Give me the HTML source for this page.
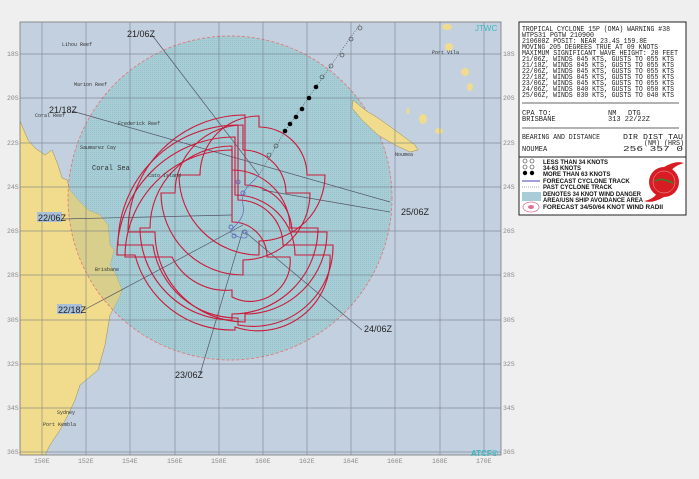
<!DOCTYPE html>
<html><head><meta charset="utf-8"><style>
html,body{margin:0;padding:0;background:#efefef;width:699px;height:479px;overflow:hidden}
svg{display:block}
.t{font-family:"Liberation Mono",monospace;font-size:7px;fill:#222}
.l{font-family:"Liberation Sans",sans-serif;font-size:6px;font-weight:bold;fill:#111}
.tag{font-family:"Liberation Sans",sans-serif;font-size:9px;fill:#222}
.ax{font-family:"Liberation Mono",monospace;font-size:6.5px;fill:#888}
.pl{font-family:"Liberation Mono",monospace;font-size:5px;fill:#333}
</style></head><body>
<svg width="699" height="479" viewBox="0 0 699 479">
<defs>
<clipPath id="map"><rect x="20" y="22" width="481" height="433"/></clipPath>
<clipPath id="circ"><circle cx="230" cy="198" r="162"/></clipPath>
<pattern id="hatch" width="2" height="2" patternUnits="userSpaceOnUse"><rect width="2" height="2" fill="#a9cdd6"/><rect width="1" height="1" fill="#95c5ca"/></pattern>
</defs>
<rect x="20" y="22" width="481" height="433" fill="#c3d0df"/>
<g clip-path="url(#map)">
<circle cx="230" cy="198" r="162" fill="url(#hatch)"/>
<polygon points="20,121 28,140 35,148 45,155 52,150 58,165 62,178 67,180 70,190 78,200 88,210 100,215 108,225 110,245 114,250 110,265 116,275 122,290 118,300 110,315 105,345 98,370 80,385 75,400 68,415 60,430 50,445 45,455 20,455" fill="#f0dc8c" stroke="#9a8a50" stroke-width="0.5"/>
<polygon clip-path="url(#circ)" points="20,121 28,140 35,148 45,155 52,150 58,165 62,178 67,180 70,190 78,200 88,210 100,215 108,225 110,245 114,250 110,265 116,275 122,290 118,300 110,315 105,345 98,370 80,385 75,400 68,415 60,430 50,445 45,455 20,455" fill="#d8cf8c"/>
<circle cx="230" cy="198" r="162" fill="none" stroke="#e87070" stroke-width="0.8" stroke-dasharray="3,2"/>
<path d="M353,100 L365,110 L378,118 L392,128 L415,145 L418,150 L410,152 L395,145 L378,135 L362,120 L352,108Z" fill="#f0dc8c" stroke="#9a8a50" stroke-width="0.5"/>
<ellipse cx="447" cy="27" rx="5" ry="3" fill="#f0dc8c"/><ellipse cx="449" cy="47" rx="4" ry="4" fill="#f0dc8c"/>
<ellipse cx="465" cy="72" rx="4" ry="4" fill="#f0dc8c"/><ellipse cx="470" cy="87" rx="3" ry="4" fill="#f0dc8c"/>
<ellipse cx="423" cy="119" rx="4" ry="5" fill="#f0dc8c"/><ellipse cx="439" cy="131" rx="4" ry="3" fill="#f0dc8c"/>
<ellipse cx="408" cy="111" rx="1.5" ry="3" fill="#f0dc8c"/>
<g stroke="#6a7280" stroke-width="0.7" opacity="0.7">
<line x1="42" y1="22" x2="42" y2="455"/><line x1="86" y1="22" x2="86" y2="455"/><line x1="130" y1="22" x2="130" y2="455"/><line x1="175" y1="22" x2="175" y2="455"/><line x1="219" y1="22" x2="219" y2="455"/><line x1="263" y1="22" x2="263" y2="455"/><line x1="307" y1="22" x2="307" y2="455"/><line x1="351" y1="22" x2="351" y2="455"/><line x1="395" y1="22" x2="395" y2="455"/><line x1="440" y1="22" x2="440" y2="455"/><line x1="484" y1="22" x2="484" y2="455"/>
<line x1="20" y1="54" x2="501" y2="54"/><line x1="20" y1="98" x2="501" y2="98"/><line x1="20" y1="143" x2="501" y2="143"/><line x1="20" y1="187" x2="501" y2="187"/><line x1="20" y1="231" x2="501" y2="231"/><line x1="20" y1="275" x2="501" y2="275"/><line x1="20" y1="320" x2="501" y2="320"/><line x1="20" y1="364" x2="501" y2="364"/><line x1="20" y1="408" x2="501" y2="408"/><line x1="20" y1="452" x2="501" y2="452"/>
</g>
<g stroke="#556" stroke-width="0.7">
<line x1="152" y1="35" x2="259" y2="175"/><line x1="72" y1="111" x2="390" y2="202"/><line x1="62" y1="219" x2="232" y2="215"/><line x1="82" y1="311" x2="243" y2="225"/><line x1="200" y1="374" x2="243" y2="230"/><line x1="362" y1="330" x2="245" y2="232"/><line x1="390" y1="212" x2="262" y2="190"/>
</g>
<g fill="none" stroke="#cc1a3a" stroke-width="1.1">
<path d="M259,127 A48,48 0 0 1 307,175 L325,175 A66,66 0 0 1 259,241 L259,255 A80,80 0 0 1 179,175 L200,175 A59,59 0 0 1 259,116 Z"/>
<path d="M243,150 A43,43 0 0 1 286,193 L310,193 A67,67 0 0 1 243,260 L243,275 A82,82 0 0 1 161,193 L175,193 A68,68 0 0 1 243,125 Z"/>
<path d="M232,170 A58,58 0 0 1 290,228 L318,228 A86,86 0 0 1 232,314 L232,320 A92,92 0 0 1 140,228 L150,228 A82,82 0 0 1 232,146 Z"/>
<path d="M245,185 A47,47 0 0 1 292,232 L327,232 A82,82 0 0 1 245,314 L245,322 A90,90 0 0 1 155,232 L128,232 A117,117 0 0 1 245,115 Z"/>
<path d="M235,195 A60,60 0 0 1 295,255 L330,255 A72,72 0 0 1 235,327 L235,330 A100,100 0 0 1 135,255 L117,255 A118,118 0 0 1 235,137 Z"/>
<path d="M238,200 A45,45 0 0 1 283,245 L333,245 A80,80 0 0 1 238,325 L238,318 A85,85 0 0 1 153,245 L118,245 A120,120 0 0 1 238,125 Z"/>
<path d="M232,222 A35,35 0 0 1 267,257 L290,257 A40,40 0 0 1 232,297 L232,290 A60,60 0 0 1 172,257 L125,257 A107,107 0 0 1 232,150 Z"/>
</g>
<path d="M259,175 C250,185 240,190 243,205 C246,218 235,225 230,232 C240,240 252,240 245,232" fill="none" stroke="#6670c0" stroke-width="0.8"/>
<circle cx="238" cy="182" r="2" fill="none" stroke="#6670c0"/><circle cx="243" cy="193" r="2" fill="none" stroke="#6670c0"/><circle cx="231" cy="227" r="2" fill="none" stroke="#6670c0"/><circle cx="245" cy="232" r="2" fill="none" stroke="#6670c0"/><circle cx="234" cy="236" r="2" fill="none" stroke="#6670c0"/>
<path d="M259,175 L285,131 L316,87 L360,24" fill="none" stroke="#444" stroke-width="0.6" stroke-dasharray="1,1.5"/>
<g fill="#000"><circle cx="285" cy="131" r="2.3"/><circle cx="290" cy="124" r="2.3"/><circle cx="296" cy="117" r="2.3"/><circle cx="302" cy="109" r="2.3"/><circle cx="309" cy="98" r="2.3"/><circle cx="316" cy="87" r="2.3"/></g>
<g fill="none" stroke="#333" stroke-width="0.6"><circle cx="269" cy="155" r="2"/><circle cx="276" cy="146" r="2"/><circle cx="322" cy="77" r="2"/><circle cx="331" cy="66" r="2"/><circle cx="342" cy="55" r="2"/><circle cx="351" cy="39" r="2"/><circle cx="360" cy="28" r="2"/></g>
</g>
<rect x="20" y="22" width="481" height="433" fill="none" stroke="#777" stroke-width="0.8"/>
<text class="pl" x="62" y="46">Lihou Reef</text><text class="pl" x="74" y="86">Marion Reef</text>
<text class="pl" x="35" y="117">Coral Reef</text><text class="pl" x="118" y="125">Frederick Reef</text>
<text class="pl" x="80" y="149">Saumarez Cay</text><text class="pl" x="148" y="177">Cato Island</text>
<text class="pl" x="92" y="170" style="font-size:7px">Coral Sea</text>
<text class="pl" x="95" y="271">Brisbane</text><text class="pl" x="57" y="414">Sydney</text><text class="pl" x="43" y="426">Port Kembla</text>
<text class="pl" x="432" y="54">Port Vila</text><text class="pl" x="395" y="156">Noumea</text>
<g class="tag">
<text x="127" y="37">21/06Z</text><text x="49" y="113">21/18Z</text>
<rect x="37" y="212" width="25" height="10" fill="#a8c0da"/><text x="38" y="221">22/06Z</text>
<rect x="57" y="304" width="25" height="10" fill="#a8c0da"/><text x="58" y="313">22/18Z</text>
<text x="175" y="378">23/06Z</text><text x="364" y="332">24/06Z</text><text x="401" y="215">25/06Z</text></g>
<text x="475" y="31" style="font-family:'Liberation Sans',sans-serif;font-size:8px;fill:#3bb8c0">JTWC</text>
<text x="471" y="456" style="font-family:'Liberation Sans',sans-serif;font-size:8px;font-weight:bold;fill:#3bb8c0">ATCF®</text>
<g class="ax"><text x="7" y="56">18S</text><text x="7" y="100">20S</text><text x="7" y="145">22S</text><text x="7" y="189">24S</text><text x="7" y="233">26S</text><text x="7" y="277">28S</text><text x="7" y="322">30S</text><text x="7" y="366">32S</text><text x="7" y="410">34S</text><text x="7" y="454">36S</text>
<text x="503" y="56">18S</text><text x="503" y="100">20S</text><text x="503" y="145">22S</text><text x="503" y="189">24S</text><text x="503" y="233">26S</text><text x="503" y="277">28S</text><text x="503" y="322">30S</text><text x="503" y="366">32S</text><text x="503" y="410">34S</text><text x="503" y="454">36S</text>
<text x="34" y="463">150E</text><text x="78" y="463">152E</text><text x="122" y="463">154E</text><text x="167" y="463">156E</text><text x="211" y="463">158E</text><text x="255" y="463">160E</text><text x="299" y="463">162E</text><text x="343" y="463">164E</text><text x="387" y="463">166E</text><text x="432" y="463">168E</text><text x="476" y="463">170E</text></g>
<rect x="519" y="22" width="167" height="135" fill="#fff" stroke="#222" stroke-width="1"/>
<g class="t">
<text x="522" y="31" textLength="148" lengthAdjust="spacingAndGlyphs">TROPICAL CYCLONE 15P (OMA) WARNING #38</text>
<text x="522" y="37" textLength="72" lengthAdjust="spacingAndGlyphs">WTPS31 PGTW 210900</text>
<text x="522" y="43" textLength="125" lengthAdjust="spacingAndGlyphs">210600Z POSIT: NEAR 23.4S 159.8E</text>
<text x="522" y="49" textLength="136" lengthAdjust="spacingAndGlyphs">MOVING 205 DEGREES TRUE AT 09 KNOTS</text>
<text x="522" y="55" textLength="156" lengthAdjust="spacingAndGlyphs">MAXIMUM SIGNIFICANT WAVE HEIGHT: 20 FEET</text>
<text x="522" y="61" textLength="152" lengthAdjust="spacingAndGlyphs">21/06Z, WINDS 045 KTS, GUSTS TO 055 KTS</text>
<text x="522" y="67" textLength="152" lengthAdjust="spacingAndGlyphs">21/18Z, WINDS 045 KTS, GUSTS TO 055 KTS</text>
<text x="522" y="73" textLength="152" lengthAdjust="spacingAndGlyphs">22/06Z, WINDS 045 KTS, GUSTS TO 055 KTS</text>
<text x="522" y="79" textLength="152" lengthAdjust="spacingAndGlyphs">22/18Z, WINDS 045 KTS, GUSTS TO 055 KTS</text>
<text x="522" y="85" textLength="152" lengthAdjust="spacingAndGlyphs">23/06Z, WINDS 045 KTS, GUSTS TO 055 KTS</text>
<text x="522" y="91" textLength="152" lengthAdjust="spacingAndGlyphs">24/06Z, WINDS 040 KTS, GUSTS TO 050 KTS</text>
<text x="522" y="97" textLength="152" lengthAdjust="spacingAndGlyphs">25/06Z, WINDS 030 KTS, GUSTS TO 040 KTS</text>
<text x="522" y="115">CPA TO:</text><text x="608" y="115">NM</text><text x="628" y="115">DTG</text>
<text x="522" y="121">BRISBANE</text><text x="608" y="121">313  22/22Z</text>
<text x="522" y="139" textLength="78" lengthAdjust="spacingAndGlyphs">BEARING AND DISTANCE</text><text x="623" y="139" textLength="60" lengthAdjust="spacingAndGlyphs">DIR  DIST  TAU</text>
<text x="644" y="145" textLength="40" lengthAdjust="spacingAndGlyphs">(NM) (HRS)</text>
<text x="522" y="151">NOUMEA</text><text x="623" y="151" textLength="60" lengthAdjust="spacingAndGlyphs">256   357    0</text>
</g>
<line x1="522" y1="103" x2="679" y2="103" stroke="#999" stroke-width="1.5"/>
<line x1="522" y1="128" x2="679" y2="128" stroke="#999" stroke-width="1.5"/>
<rect x="519" y="157" width="167" height="58" fill="#fff" stroke="#222" stroke-width="1"/>
<g class="l"><text x="543" y="164">LESS THAN 34 KNOTS</text><text x="543" y="170">34-63 KNOTS</text><text x="543" y="176">MORE THAN 63 KNOTS</text><text x="543" y="183">FORECAST CYCLONE TRACK</text><text x="543" y="189">PAST CYCLONE TRACK</text><text x="543" y="196" textLength="98" lengthAdjust="spacingAndGlyphs">DENOTES 34 KNOT WIND DANGER</text><text x="543" y="202" textLength="100" lengthAdjust="spacingAndGlyphs">AREA/USN SHIP AVOIDANCE AREA</text><text x="543" y="209" textLength="120" lengthAdjust="spacingAndGlyphs">FORECAST 34/50/64 KNOT WIND RADII</text></g>
<g fill="none" stroke="#333" stroke-width="0.6"><circle cx="525" cy="161" r="2"/><circle cx="532" cy="161" r="2"/><circle cx="525" cy="167" r="2"/><circle cx="532" cy="167" r="2"/></g>
<circle cx="525" cy="173" r="2.2"/><circle cx="532" cy="173" r="2.2"/>
<line x1="522" y1="181" x2="540" y2="181" stroke="#8080d0" stroke-width="1.5"/>
<line x1="522" y1="187" x2="540" y2="187" stroke="#555" stroke-width="0.6" stroke-dasharray="1,1"/>
<rect x="522" y="192" width="19" height="9" fill="#a9cdd6"/>
<ellipse cx="531" cy="207" rx="8" ry="5" fill="none" stroke="#e07090" stroke-width="0.8"/><ellipse cx="531" cy="207" rx="3" ry="2" fill="#e07090"/>
<circle cx="664" cy="182" r="15" fill="#d81c24"/><path d="M664,167 Q676,160 684,163 Q674,166 671,171Z M664,197 Q652,204 644,201 Q654,199 657,193Z" fill="#d81c24"/>
<circle cx="664" cy="182" r="11" fill="none" stroke="#f0d0d0" stroke-width="0.4"/>
<path d="M655,181 L661,179 L668,181 L673,183" stroke="#2a8a2a" stroke-width="1.5" fill="none"/>
</svg>
</body></html>
